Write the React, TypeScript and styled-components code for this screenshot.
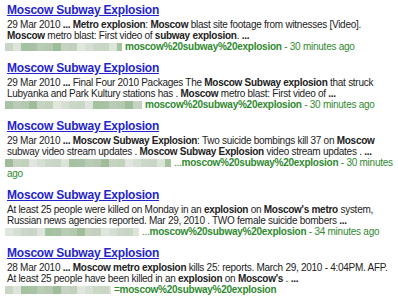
import React from "react";
import styled, { createGlobalStyle } from "styled-components";

const GlobalStyle = createGlobalStyle`
  html, body {
    margin: 0;
    background: #ffffff;
    font-family: "Liberation Sans", Arial, sans-serif;
  }
`;

const mosaic = ["#c9d6c6", "#b4c9b0", "#d6dfd4", "#a9c2a5", "#c2d1be", "#dde5db", "#9fbd9a", "#cbd8c8", "#b9ccb5", "#e0e6de", "#a4c29f", "#c6d3c3"];

type Result = {
  lines: React.ReactNode[];
  blur: number;
  prefix?: string;
  time?: string;
  tail?: string;
};

const results: Result[] = [
  {
    blur: 117,
    lines: [
      <>29 Mar 2010 <b>...</b> <b>Metro explosion</b>: <b>Moscow</b> blast site footage from witnesses [Video].</>,
      <><b>Moscow</b> metro blast: First video of <b>subway explosion</b>. <b>...</b></>,
    ],
    time: " - 30 minutes ago",
  },
  {
    blur: 137,
    lines: [
      <>29 Mar 2010 <b>...</b> Final Four 2010 Packages The <b>Moscow Subway explosion</b> that struck</>,
      <>Lubyanka and Park Kultury stations has . <b>Moscow</b> metro blast: First video of <b>...</b></>,
    ],
    time: " - 30 minutes ago",
  },
  {
    blur: 166,
    lines: [
      <>29 Mar 2010 <b>...</b> <b>Moscow Subway Explosion</b>: Two suicide bombings kill 37 on <b>Moscow</b></>,
      <>subway video stream updates . <b>Moscow Subway Explosion</b> video stream updates . <b>...</b></>,
    ],
    prefix: "...",
    time: " - 30 minutes",
    tail: "ago",
  },
  {
    blur: 134,
    lines: [
      <>At least 25 people were killed on Monday in an <b>explosion</b> on <b>Moscow's metro</b> system,</>,
      <>Russian news agencies reported. Mar 29, 2010 . TWO female suicide bombers <b>...</b></>,
    ],
    prefix: "...",
    time: " - 34 minutes ago",
  },
  {
    blur: 106,
    lines: [
      <>28 Mar 2010 <b>...</b> <b>Moscow metro explosion</b> kills 25: reports. March 29, 2010 - 4:04PM. AFP.</>,
      <>At least 25 people have been killed in an <b>explosion</b> on <b>Moscow's</b> . <b>...</b></>,
    ],
    prefix: "=",
  },
];

const Blur = ({ width, seed }: { width: number; seed: number }) => {
  const stops: string[] = [];
  for (let x = 0, i = seed; x < width; x += 8, i += 5) {
    const c = mosaic[i % mosaic.length];
    stops.push(`${c} ${x}px`, `${c} ${Math.min(x + 8, width)}px`);
  }
  return <BlurBox style={{ width, background: `linear-gradient(90deg, ${stops.join(", ")})` }} />;
};

const App = () => {
  return (
    <Page>
      <GlobalStyle />
      {results.map((r, i) => (
        <Item key={i}>
          <Title href="#">Moscow Subway Explosion</Title>
          {r.lines.map((l, j) => (
            <Line key={j}>{l}</Line>
          ))}
          <UrlLine>
            <Blur width={r.blur} seed={i * 3} />
            {r.prefix}
            <UrlBold>moscow%20subway%20explosion</UrlBold>
            {r.time && <Time>{r.time}</Time>}
          </UrlLine>
          {r.tail && <Tail>{r.tail}</Tail>}
        </Item>
      ))}
    </Page>
  );
};

export default App;

const Page = styled.div`
  display: flex;
  flex-direction: column;
  gap: 8px;
  padding: 2px 0 0 7px;
  width: 391px;
`;

const Item = styled.div`
  display: flex;
  flex-direction: column;
`;

const Title = styled.a`
  font-size: 12px;
  line-height: 17px;
  font-weight: bold;
  letter-spacing: -0.2px;
  color: #2424cc;
  text-decoration: underline;
  align-self: flex-start;
`;

const Line = styled.div`
  font-size: 10px;
  line-height: 11px;
  color: #222222;
  white-space: nowrap;
  letter-spacing: -0.27px;
`;

const UrlLine = styled.div`
  display: flex;
  align-items: center;
  font-size: 10px;
  line-height: 11px;
  color: #2f8a2f;
  letter-spacing: -0.25px;
  white-space: pre;
  margin-left: -2px;
`;

const UrlBold = styled.b`
  font-weight: bold;
`;

const Time = styled.span`
  color: #2f8a2f;
`;

const Tail = styled.div`
  font-size: 10px;
  line-height: 11px;
  color: #2f8a2f;
  letter-spacing: -0.25px;
`;

const BlurBox = styled.span`
  flex: none;
  height: 8px;
  margin-right: 3px;
`;
